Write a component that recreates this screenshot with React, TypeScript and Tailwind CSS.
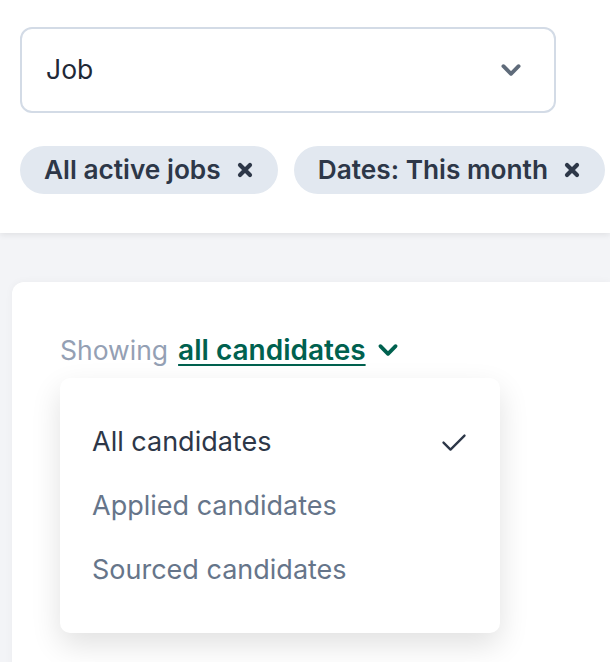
import React from 'react';

const font = { fontFamily: 'Inter, "Noto Sans", sans-serif' };

const Chevron = ({ className }: { className?: string }) => (
  <svg viewBox="0 0 24 24" className={className} fill="none" stroke="currentColor" strokeWidth={3.5} strokeLinecap="round" strokeLinejoin="round">
    <path d="M5 8.5l7 7 7-7" />
  </svg>
);

const XMark = () => (
  <svg viewBox="0 0 16 16" className="w-[16px] h-[16px] text-[#2d3748]" fill="none" stroke="currentColor" strokeWidth={4.2} strokeLinecap="round">
    <path d="M3 3l10 10M13 3L3 13" />
  </svg>
);

const Chip = ({ label }: { label: string }) => (
  <div className="flex items-center gap-[16px] h-12 pl-6 pr-[25px] rounded-full bg-[#e2e8f0] text-[26.25px] font-semibold text-[#2d3748] whitespace-nowrap">
    <span>{label}</span>
    <XMark />
  </div>
);

export default function App() {
  const options = ['All candidates', 'Applied candidates', 'Sourced candidates'];

  return (
    <div className="w-[610px] h-[662px] overflow-hidden bg-[#f3f4f7]" style={font}>
      <div className="relative z-10 bg-white h-[233px] pt-[27px] pl-5 shadow-[0_2px_6px_rgba(0,0,0,0.08)]">
        <div className="w-[536px] h-[86px] flex items-center justify-between pl-6 pr-[30px] border-2 border-[#d3dbe6] rounded-xl">
          <span className="text-[26.5px] text-[#1f2937]">Job</span>
          <Chevron className="w-[26px] h-[26px] text-[#5f6b7a]" />
        </div>
        <div className="flex gap-4 mt-[33px]">
          <Chip label="All active jobs" />
          <Chip label="Dates: This month" />
        </div>
      </div>

      <div className="pt-[49px] pl-3">
        <div className="relative bg-white rounded-tl-xl h-[420px] pl-12 pt-[52px] shadow-[0_0_8px_rgba(0,0,0,0.04)]">
          <div className="flex items-center text-[26.5px] leading-8">
            <span className="text-[#94a0b4]">Showing</span>
            <span className="ml-[10px] text-[28px] font-semibold text-[#00614f] underline decoration-2 underline-offset-[4px]">all candidates</span>
            <Chevron className="ml-[9px] w-[26px] h-[26px] text-[#00614f]" />
          </div>

          <div className="absolute left-12 top-[96px] w-[440px] h-[255px] bg-white rounded-[10px] shadow-[0_12px_30px_rgba(0,0,0,0.12)] pt-8 px-8">
            {options.map((opt, i) => (
              <div key={opt} className="h-16 flex items-center justify-between text-[27px]">
                <span className={i === 0 ? 'text-[#2d3748]' : 'text-[#66758a]'}>{opt}</span>
                {i === 0 && (
                  <svg viewBox="0 0 24 24" className="w-[28px] h-[28px] text-[#2d3748]" fill="none" stroke="currentColor" strokeWidth={2} strokeLinecap="round" strokeLinejoin="round">
                    <path d="M3 12.5l6 6L21 6.5" />
                  </svg>
                )}
              </div>
            ))}
          </div>
        </div>
      </div>
    </div>
  );
}
